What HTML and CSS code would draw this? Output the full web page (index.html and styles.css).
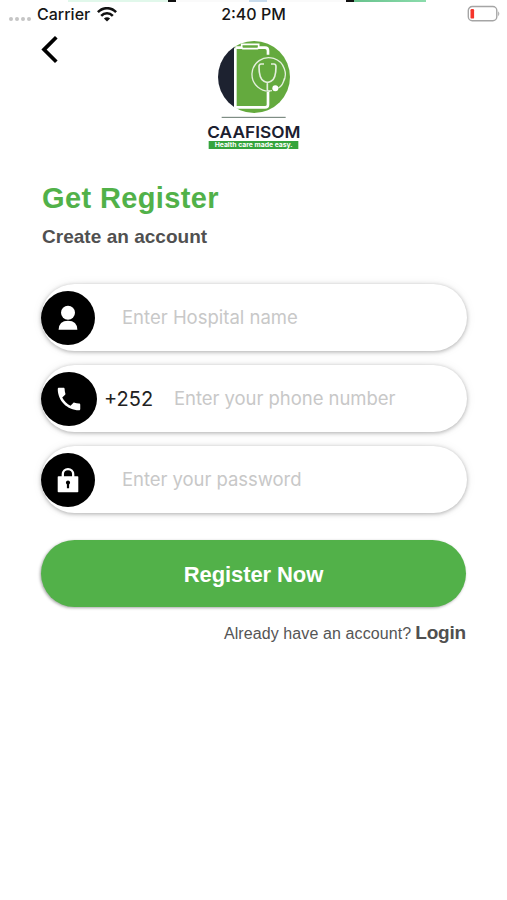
FILE: index.html
```html
<!DOCTYPE html>
<html lang="en">
<head>
<meta charset="utf-8">
<title>Get Register</title>
<link rel="stylesheet" href="styles.css">
</head>
<body>
<div class="backdrop"><i class="mint"></i><i class="dark"></i><i class="pale"></i><i class="blue"></i><i class="grey"></i><i class="dark"></i><i class="green"></i></div>
<header class="status">
  <div class="carrier">
    <span class="dots"><i></i><i></i><i></i><i></i></span>
    <span class="carrier-name">Carrier</span>
    <svg class="wifi" viewBox="0 0 20 15" width="20" height="15"><g fill="none" stroke="#111" stroke-width="2.5"><path d="M.9 5.2C6-.2 14-.2 19.1 5.2"/><path d="M4.2 8.8C7.4 5.3 12.6 5.3 15.8 8.8"/></g><path d="M6.900 11.500c1.800-1.800 4.400-1.800 6.200 0L10 14.600z" fill="#111"/></svg>
  </div>
  <span class="time">2:40 PM</span>
  <svg class="battery" viewBox="0 0 34 18" width="34" height="18"><rect x="1.3" y="1.5" width="28.5" height="14.3" rx="4" fill="#fff" stroke="#a5a5a5" stroke-width="1.4"/><rect x="3.5" y="4" width="3.6" height="9.6" rx="1.2" fill="#f5342b"/><path d="M31.2 6.3q2.2 2.5 0 5z" fill="#a5a5a5"/></svg>
</header>
<section class="brand">
  <svg class="back" viewBox="0 0 20 30" width="20" height="30"><path d="M15.3 2.3 3 14.6 15.3 26.8" fill="none" stroke="#000" stroke-width="3.7"/></svg>
  <svg class="logo" viewBox="0 0 360 375" width="120" height="125">
    <defs><clipPath id="disc"><circle cx="177" cy="141" r="108"/></clipPath></defs>
    <g clip-path="url(#disc)"><path fill="#64aa3e" d="M118 30h170v222H118z"/><path fill="#1d2230" d="M60 30h58v222H60z"/></g>
    <g fill="none" stroke="#fff">
      <path stroke-width="8" d="M121 55v178M219 186v38q0 8-9 8h-89M121 53h20M190 53h20q9 0 9 9v12"/>
      <path stroke-width="5" d="M140 43h51v7q0 6-7 6h-37q-7 0-7-6z"/>
      <path stroke-width="4" stroke="#e3efdc" d="M231 182A50 50 0 1 1 263 160M250 174q14-7 18-29"/>
      <path stroke-width="5" stroke="#e3efdc" d="M207 102h-9q-6 0-6 8 0 36 15 44 10 6 21 0 15-8 15-44 0-8-6-8h-9M217 156v22q0 7 8 5"/>
    </g>
    <circle cx="241" cy="175" r="9" fill="#fff"/>
    <path d="M80 262h192" stroke="#64766b" stroke-width="3"/>
    <text class="wordmark" x="37" y="323" textLength="279" lengthAdjust="spacingAndGlyphs">CAAFISOM</text>
    <path fill="#35a43c" d="M41 333h269v24H41z"/>
    <text class="tagline" x="59" y="352" textLength="234" lengthAdjust="spacingAndGlyphs">Health care made easy.</text>
  </svg>
</section>
<main>
  <h1>Get Register</h1>
  <h2>Create an account</h2>
  <form>
    <div class="field">
      <span class="badge"><svg viewBox="0 0 24 28" width="24" height="28"><circle cx="12" cy="8.7" r="7" fill="#fff"/><path d="M2.6 25.8q.3-9 9.4-9t9.4 9z" fill="#fff"/></svg></span>
      <span class="hint hospital">Enter Hospital name</span>
    </div>
    <div class="field">
      <span class="badge wide"><svg viewBox="0 0 24 24" width="30" height="30"><path fill="#fff" d="M6.6 10.8c1.4 2.8 3.8 5.1 6.6 6.6l2.2-2.2c.3-.3.7-.4 1-.2 1.100.4 2.300.6 3.600.6.6 0 1 .4 1 1V20c0 .6-.4 1-1 1C10.600 21 3 13.400 3 4c0-.6.4-1 1-1h3.500c.6 0 1 .4 1 1 0 1.300.2 2.500.6 3.600.1.3 0 .7-.2 1z"/></svg></span>
      <span class="code">+252</span>
      <span class="hint phone">Enter your phone number</span>
    </div>
    <div class="field">
      <span class="badge"><svg viewBox="0 0 24 28" width="24" height="28"><path d="M6.800 11V8.300a5.200 5.200 0 0 1 10.400 0V11" fill="none" stroke="#fff" stroke-width="2.300"/><rect x="1.700" y="10.300" width="20.600" height="16" rx=".8" fill="#fff"/><path fill="#000" d="M12 14.500a2.100 2.100 0 0 1 1.100 3.900v3.800h-2.200v-3.800A2.100 2.100 0 0 1 12 14.500z"/></svg></span>
      <span class="hint password">Enter your password</span>
    </div>
    <button type="button">Register Now</button>
  </form>
  <p class="signin"><span>Already have an account?</span><b>Login</b></p>
</main>
</body>
</html>
```
FILE: styles.css
```css
* { box-sizing: border-box; }
body { margin: 0; width: 507px; height: 900px; overflow: hidden; background: #fff; font-family: "Liberation Sans", Arial, sans-serif; }
.backdrop { display: flex; height: 2px; padding-left: 68px; }
.backdrop .mint { width: 100px; background: #e1f8eb; }
.backdrop .dark { width: 8px; background: #111; }
.backdrop .pale { width: 73px; background: #fafafa; }
.backdrop .blue { width: 18px; background: #c9dced; }
.backdrop .grey { width: 79px; background: #fafafa; }
.backdrop .green { width: 72px; background: linear-gradient(90deg, #68c28d, #8bdcac); }
.status { display: grid; grid-template-columns: 1fr auto 1fr; align-items: center; height: 25px; margin-top: -1px; padding: 0 6px 0 8px; font: 500 16px/24px Inter, sans-serif; color: #161616; }
.carrier { display: flex; align-items: center; }
.dots { display: flex; gap: 2px; margin: 10px 6px 0 1px; }
.dots i { width: 4px; height: 4px; border-radius: 50%; background: #c5c5c5; }
.wifi { margin: 1px 0 0 7px; }
.time { margin-right: 2px; }
.battery { justify-self: end; margin-top: 1px; }
.brand { display: grid; grid-template-columns: 195px 120px; height: 125px; margin-top: 4px; }
.back { margin: 5px 0 0 41px; }
.wordmark { font: 600 49px Inter, sans-serif; fill: #1b2030; }
.tagline { font: 700 20px Inter, sans-serif; fill: #fff; }
main { padding: 0 40px 0 41px; }
h1 { margin: 26px 0 0 1px; font-size: 29px; line-height: 34px; letter-spacing: .38px; color: #51b149; }
h2 { margin: 11px 0 0 1px; font-size: 19px; line-height: 22px; letter-spacing: .03px; color: #505050; }
form { display: flex; flex-direction: column; gap: 14px; margin-top: 36px; }
.field { display: flex; align-items: center; height: 67px; border-radius: 34px; background: #fff; box-shadow: 0 1px 4px rgba(0,0,0,.3), 0 0 12px rgba(0,0,0,.06); }
.badge { display: flex; align-items: center; justify-content: center; width: 54px; height: 54px; border-radius: 50%; background: #000; }
.badge.wide { width: 56px; }
.hint { margin-bottom: 2px; font: 400 18.5px/24px Inter, sans-serif; color: #c8c8c8; white-space: nowrap; }
.hospital, .password { margin-left: 27px; }
.password { letter-spacing: -.05px; }
.code { width: 49px; margin-left: 7px; font: 400 20px/24px Inter, sans-serif; color: #222; }
.phone { margin-left: 21px; letter-spacing: -.05px; }
button { height: 67px; margin-top: 13px; margin-right: 1px; padding: 2px 0 0; border: 0; border-radius: 34px; background: #52b149; color: #fff; font: 700 22px/26px "Liberation Sans", Arial, sans-serif; letter-spacing: -.1px; box-shadow: -1px 1px 3px rgba(0,0,0,.35); }
.signin { display: flex; justify-content: flex-end; align-items: baseline; gap: 4px; margin: 15px 1px 0 0; line-height: 22px; font-size: 16px; letter-spacing: .1px; color: #555; }
.signin b { font-size: 19px; letter-spacing: -.2px; color: #505050; }
```
